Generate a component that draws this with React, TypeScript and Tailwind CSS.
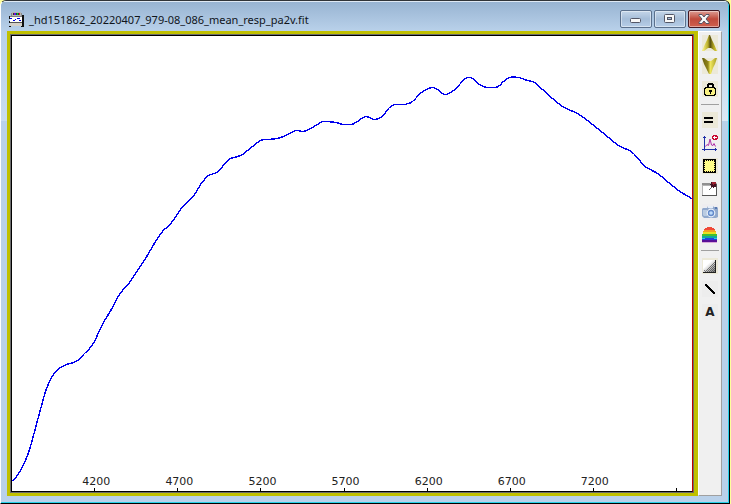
import type { ReactNode } from 'react';

const ticks = [4200, 4700, 5200, 5700, 6200, 6700, 7200, 7700];

const curve = [
  [12, 481], [16, 476], [20, 470], [23, 464], [27, 455], [30, 446], [33, 435], [37, 420], [40, 409], [45, 391],
  [50, 379], [53, 374], [56, 370], [60, 367], [66, 364], [73, 362], [77, 360], [84, 353], [89, 348], [94, 341],
  [98, 332], [103, 322], [112, 307], [117, 297], [122, 290], [129, 282], [137, 270], [145, 258], [152, 246],
  [157, 238], [162, 231], [171, 222], [180, 209], [185, 203], [191, 198], [196, 191], [200, 184], [204, 179],
  [208, 175], [216, 172], [222, 166], [226, 161], [230, 158], [237, 156], [242, 154], [252, 146], [260, 140],
  [266, 139], [277, 138], [285, 135], [291, 132], [296, 130], [303, 131], [310, 128], [317, 124], [323, 121],
  [335, 122], [343, 124], [351, 124], [357, 121], [361, 118], [365, 116], [369, 117], [374, 119], [380, 117],
  [385, 112], [389, 107], [394, 104], [403, 104], [408, 103], [412, 101], [421, 92], [426, 89], [432, 87],
  [437, 89], [442, 93], [446, 94], [453, 90], [460, 83], [465, 78], [468, 77], [472, 78], [479, 84], [483, 86],
  [487, 87], [495, 87], [499, 85], [503, 81], [509, 77], [518, 77], [527, 80], [534, 82], [542, 89], [552, 98],
  [562, 106], [568, 109], [577, 113], [587, 120], [602, 132], [618, 145], [629, 150], [634, 154], [640, 161],
  [646, 167], [657, 173], [668, 182], [678, 190], [686, 195], [693, 199],
];

// smooth path through the samples, moved to the plot's top left corner (12, 36)
function smoothPath(samples: number[][]) {
  const p = samples.map(([x, y]) => [x - 11.5, y - 35.5]);
  let d = `M${p[0][0]} ${p[0][1]}`;
  for (let i = 0; i < p.length - 1; i++) {
    const a = p[Math.max(i - 1, 0)];
    const b = p[i];
    const c = p[i + 1];
    const e = p[Math.min(i + 2, p.length - 1)];
    d += `C${b[0] + (c[0] - a[0]) / 6} ${b[1] + (c[1] - a[1]) / 6} ${c[0] - (e[0] - b[0]) / 6} ${c[1] - (e[1] - b[1]) / 6} ${c[0]} ${c[1]}`;
  }
  return d;
}

function Tool({ label, className = '', children }: { label: string; className?: string; children: ReactNode }) {
  return (
    <button type="button" aria-label={label} className={`block size-4 shrink-0 ${className}`}>
      <svg viewBox="0 0 16 16" className="block size-4" shapeRendering="crispEdges">
        {children}
      </svg>
    </button>
  );
}

function Separator() {
  return <div className="h-px w-[18px] shrink-0 bg-[#a0a0a0]" />;
}

function FileIcon() {
  return (
    <svg viewBox="0 0 16 16" className="size-4 shrink-0" shapeRendering="crispEdges">
      <path d="M4 0h9v4H4z" fill="#b4b4b4" />
      <path d="M3 1h1v3H3zM13 1h1v3h-1z" fill="#888" />
      <path d="M5 1h7v2H5z" fill="#333" />
      <path d="M6 1h1v2H6z" fill="#a000c0" />
      <path d="M7 1h1v2H7z" fill="#2030ff" />
      <path d="M9 1h1v2H9z" fill="#00d020" />
      <path d="M11 1h1v2h-1z" fill="#f02020" />
      <path d="M2 5h13v5H2z" fill="#fff" />
      <path d="M2 4h13v1H2z" fill="#808080" />
      <path d="M2 10h13v4H2z" fill="#d4d0c8" />
      <path d="M2 10h13v1H2z" fill="#555" />
      <path d="M1 4h1v3H1zM1 9h1v2H1zM1 14h2v1H1zM14 3h2v12h-2zM13 14h1v1h-1z" fill="#111" />
      <path d="M2 6h2v1H2zM5 8h2v1H5zM7 7h1v1H7zM9 6h3v1H9zM11 8h2v1h-2z" fill="#0000e0" />
    </svg>
  );
}

function Toolbar() {
  return (
    <div className="flex w-6 shrink-0 flex-col items-center gap-[7px] border border-r-[#a0a0a0] border-b-[#a0a0a0] border-t-white border-l-white bg-[#f0f0f0] pt-[3px]">
      <Tool label="Scale up" className="bg-[#ece9d8]">
        <defs>
          <linearGradient id="gold" x1="0" x2="1">
            <stop offset="0.1" stopColor="#f0e878" />
            <stop offset="0.4" stopColor="#b8ac28" />
            <stop offset="0.55" stopColor="#585010" />
            <stop offset="0.75" stopColor="#a89c20" />
            <stop offset="1" stopColor="#e0d438" />
          </linearGradient>
          <linearGradient id="goldDown" x1="0" x2="1">
            <stop offset="0" stopColor="#686010" />
            <stop offset="0.4" stopColor="#908418" />
            <stop offset="0.55" stopColor="#f0e860" />
            <stop offset="1" stopColor="#a89c20" />
          </linearGradient>
        </defs>
        <path d="M7 0h1l2 5 2 4 3 7h-2l-4-3H6l-4 3H0l3-7 2-4z" fill="url(#gold)" shapeRendering="auto" />
      </Tool>
      <Tool label="Scale down" className="bg-[#ece9d8]">
        <path d="M0 0h2l4 3h3l4-3h2l-2 6-2 4-2 6H7l-3-6-2-4z" fill="url(#goldDown)" shapeRendering="auto" />
      </Tool>
      <Tool label="Lock" className="bg-[#ece9d8]">
        <path d="M5 3h1V2h5v1h1v4h-2V4H7v3H5z" />
        <path d="M3 6h10v1h1v7h-1v1H3v-1H2V7h1z" />
        <path d="M4 7h8v1h1v5h-1v1H4v-1H3V8h1z" fill="#f8f080" />
        <path d="M7 9h3v2H9v2H8v-2H7z" />
      </Tool>
      <Separator />
      <Tool label="Reset scale" className="bg-[#ece9d8]">
        <path d="M2 5h9v2H2zM2 9h9v2H2z" />
      </Tool>
      <Tool label="Add profile">
        <path d="M2 1h1v15H2zM0 14h15v1H0zM1 2h1v1H1zM3 2h1v1H3zM13 13h1v1h-1zM13 15h1v1h-1z" fill="#2030a8" />
        <path
          d="M3.5 11.5L5 9.5l1.5 1L8 4l1.5 6 1.5 0.5 1-2 1.5 3"
          fill="none"
          stroke="#b030a8"
          shapeRendering="auto"
        />
        <path d="M11 0h4v1h1v3h-1v1h-4V4h-1V1h1z" fill="#c80832" />
        <path d="M11 2h4v1h-4zM12 1h1v3h-1z" fill="#fff" />
      </Tool>
      <Tool label="Select region" className="bg-[#ece9d8]">
        <path d="M1 1h13v14H1z" />
        <path d="M3 3h9v10H3z" fill="#fffc88" />
        <path
          d="M3 2.5h1M5 2.5h1M7 2.5h1M9 2.5h1M11 2.5h1M3 13.5h1M5 13.5h1M7 13.5h1M9 13.5h1M11 13.5h1M2 4.5h1M2 6.5h1M2 8.5h1M2 10.5h1M2 12.5h1M12 4.5h1M12 6.5h1M12 8.5h1M12 10.5h1M12 12.5h1"
          fill="none"
          stroke="#fff080"
        />
      </Tool>
      <Tool label="Pin window">
        <path d="M0 2h15v13H0z" fill="#b4b4b4" />
        <path d="M14 3h1v12H0v-1h14z" fill="#555" />
        <path d="M1 5h13v9H1z" fill="#fff" />
        <path d="M0 2h8v2H0z" fill="#909090" />
        <path d="M9 1h5v5h-2v1h-1V6H9V4H8V3h1z" fill="#421020" />
        <path d="M10 1h4v2h-2v1h-1V3h-1z" fill="#9c2030" />
        <path d="M9 6h1v1H9zM8 7h1v1H8zM7 8h1v1H7z" fill="#666" />
      </Tool>
      <Tool label="Snapshot" className="bg-[#eeedf0]">
        <g shapeRendering="auto">
          <path d="M1 4h4l1-2h5l1 1h3l1 1v9l-2 1H2l-2-2V5z" fill="#91a8cc" />
          <path d="M2 3h2v1H2zM6 2h5v2H6z" fill="#e6eef9" />
          <path d="M1 6h4v6H2l-1-1z" fill="#bacbe2" />
          <circle cx="9" cy="9" r="4.4" fill="#e9f0fa" />
          <circle cx="9" cy="9" r="3.2" fill="#6389ca" />
          <circle cx="9" cy="9" r="1.8" fill="#bddafa" />
          <path d="M13 3h2v2h-2z" fill="#5878b0" />
        </g>
      </Tool>
      <Tool label="Spectrum colours">
        <path d="M5 0h5v1h2v1h1v1H2V2h1V1h2z" fill="#f04a38" />
        <path d="M2 3h11v1h1v1H1V4h1z" fill="#f4a020" />
        <path d="M1 5h13v2H1z" fill="#e8e020" />
        <path d="M0 7h15v2H0z" fill="#40c030" />
        <path d="M0 9h15v2H0z" fill="#10a8a0" />
        <path d="M0 11h15v2H0z" fill="#2040e0" />
        <path d="M0 13h15v2H0z" fill="#581098" />
        <path d="M0 11h3v1H0zM12 11h3v1h-3z" fill="#20d0e8" />
        <path d="M0 15h15v1H0z" fill="#d8a8d8" />
      </Tool>
      <Separator />
      <Tool label="Gradient" className="bg-[#ece9d8]">
        <defs>
          <linearGradient id="shade" x1="0" y1="0" x2="1" y2="1">
            <stop offset="0.35" stopColor="#fff" />
            <stop offset="1" stopColor="#707070" />
          </linearGradient>
          <pattern id="dots" width="2" height="2" patternUnits="userSpaceOnUse">
            <path d="M0 0h1v1H0zM1 1h1v1H1z" fill="#333" fillOpacity="0.6" />
          </pattern>
        </defs>
        <path d="M1 2h13v12H1z" fill="url(#shade)" />
        <path d="M12 3h1v11H2v-2h2v-1h2V9h2V7h2V5h2z" fill="url(#dots)" />
        <path d="M13 2h1v13H1v-1h12z" fill="#222" />
      </Tool>
      <Tool label="Line" className="bg-[#ededed]">
        <path d="M3 3h2v1h1v1h1v1h1v1h1v1h1v1h1v1h1v1h1v2h-2v-1h-1v-1H9v-1H8V9H7V8H6V7H5V6H4V5H3z" />
      </Tool>
      <button
        type="button"
        className="block size-4 shrink-0 bg-[#ededed] text-center font-['DejaVu_Sans',sans-serif] text-[12px] leading-4 font-bold text-[#222]"
      >
        A
      </button>
    </div>
  );
}

function WindowButton({ label, danger = false, children }: { label: string; danger?: boolean; children: ReactNode }) {
  const colors = danger
    ? 'border-[#431822] bg-linear-to-b from-[#dc9c94] via-[#c04a3c] via-50% to-[#cf604e]'
    : 'border-[#5b708c] bg-linear-to-b from-[#c5d6e9] via-[#a5bdd8] via-50% to-[#b7cee8]';
  return (
    <button
      type="button"
      aria-label={label}
      className={`flex h-[18px] w-8 items-center justify-center rounded-xs border shadow-[inset_0_0_0_1px_#ffffff70] ${colors}`}
    >
      <svg viewBox="0 0 12 10" className="h-[10px] w-3">
        {children}
      </svg>
    </button>
  );
}

function TitleBar() {
  return (
    <header className="flex h-[29px] items-center justify-between bg-linear-to-b from-[#98b4d2] to-[#b9d1ea] pr-2 pl-[7px]">
      <div className="flex items-center gap-[5px] pt-[6px]">
        <FileIcon />
        <h1 className="font-['Noto_Sans',sans-serif] text-[11px] leading-4 whitespace-nowrap text-[#10151c]">
          _hd151862_20220407_979-08_086_mean_resp_pa2v.fit
        </h1>
      </div>
      <div className="flex gap-[2px] pt-[5px]">
        <WindowButton label="Minimize">
          <rect x="0.5" y="4.5" width="10" height="4" rx="1" fill="#f8f8f8" stroke="#535666" />
        </WindowButton>
        <WindowButton label="Maximize">
          <rect x="0.5" y="0.5" width="10" height="8" rx="1" fill="#f8f8f8" stroke="#535666" />
          <rect x="3.5" y="3.5" width="4" height="2" fill="#a5bdd8" stroke="#535666" />
        </WindowButton>
        <WindowButton label="Close" danger>
          <path d="M1 0.5h3l2 2.5 2-2.5h3v1L8 5l3 3.5v1H8L6 7 4 9.5H1v-1L4 5 1 1.5z" fill="#f8f8f8" stroke="#535666" />
        </WindowButton>
      </div>
    </header>
  );
}

function Chart() {
  return (
    <div className="flex-1 border-3 border-r-4 border-[#c0c000]">
      <div className="h-full border border-[#6c6c6c]">
        <div className="h-full border border-r-[#c00000] border-black bg-white">
          <svg className="block size-full" role="img" aria-label="Spectral response">
            <svg width="100%" height="100%" viewBox="0 0 680 455" preserveAspectRatio="none">
              <path
                d={smoothPath(curve)}
                fill="none"
                stroke="#0000ee"
                strokeWidth="1.4"
                strokeLinejoin="round"
                shapeRendering="crispEdges"
                vectorEffect="non-scaling-stroke"
              />
            </svg>
            {ticks.map((tick, i) => (
              <svg key={tick} x={`${12.1 + i * 12.22}%`} y="100%" overflow="visible">
                <rect y="-3" width="1" height="3" shapeRendering="crispEdges" />
                {tick < 7700 && (
                  <text x="-12" y="-6" fill="#222" className="font-['DejaVu_Sans',sans-serif] text-[11px]">
                    {tick}
                  </text>
                )}
              </svg>
            ))}
          </svg>
        </div>
      </div>
    </div>
  );
}

export default function App() {
  return (
    <div className="min-h-screen bg-[#ffff9c] pr-px">
      <div className="flex h-screen flex-col overflow-hidden rounded-t-md border border-black border-t-[#303438] border-l-white bg-[#b9d1ea]">
        <div className="flex min-h-0 flex-1 flex-col border-t border-r border-b border-t-[#dfe9f4] border-r-[#28d0e8] border-b-[#28d0e8]">
          <TitleBar />
          <main className="flex min-h-0 flex-1 pb-[6px]">
            <div className="w-[6px] shrink-0">
              <div className="h-[90px] bg-linear-to-b from-[#b9d1ea] to-[#c8dcf0]" />
            </div>
            <Chart />
            <Toolbar />
            <div className="w-[6px] shrink-0">
              <div className="h-[90px] bg-linear-to-b from-[#b9d1ea] to-[#dce8f5]" />
            </div>
          </main>
        </div>
      </div>
    </div>
  );
}
